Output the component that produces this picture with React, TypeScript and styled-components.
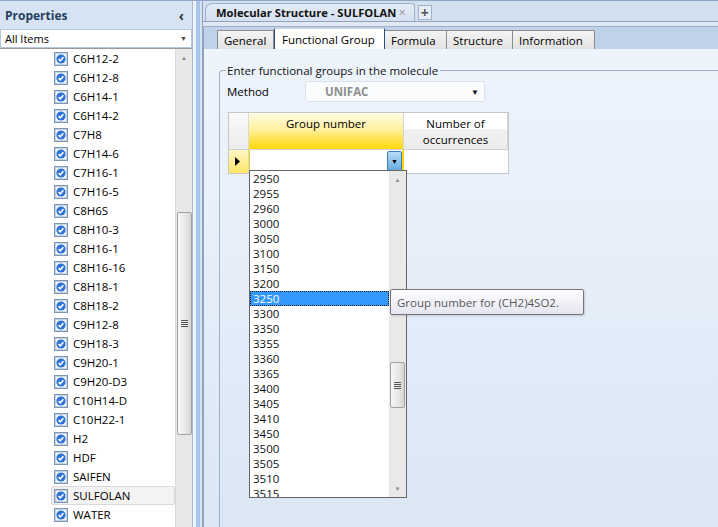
import React from "react";
import styled, { createGlobalStyle } from "styled-components";

const Global = createGlobalStyle`
  html, body { margin: 0; padding: 0; }
  body {
    width: 718px; height: 527px; overflow: hidden;
    font-family: "Open Sans", "Noto Sans", sans-serif;
    font-size: 11px; color: #000;
  }
  * { box-sizing: border-box; }
`;

const Root = styled.div`
  display: flex;
  width: 718px;
  height: 527px;
  overflow: hidden;
  border-top: 1px solid #8ea6c8;
  background: #d3e0f0;
`;

/* ---------- Left panel ---------- */
const LeftPanel = styled.div`
  width: 193px;
  display: flex;
  flex-direction: column;
  background: #d6e3f3;
  border-right: 1px solid #a9b8cb;
`;

const PanelHeader = styled.div`
  height: 28px;
  display: flex;
  align-items: center;
  justify-content: space-between;
  padding: 1px 8px 0 5px;
  font-weight: 700;
  font-size: 12px;
  color: #263e60;
`;

const Chevron = styled.span`
  font-size: 14px;
  font-weight: 700;
  color: #333;
  line-height: 1;
`;

const FilterBox = styled.div`
  height: 19px;
  background: #fff;
  border: 1px solid #b5c8e0;
  display: flex;
  align-items: center;
  justify-content: space-between;
  padding: 0 4px 0 4px;
  font-size: 11px;
`;

const SmallArrow = styled.span`
  font-size: 7px;
  color: #444;
`;

const ListArea = styled.div`
  flex: 1;
  display: flex;
  background: #fff;
  border-top: 1px solid #9a9a9a;
  overflow: hidden;
`;

const ItemColumn = styled.div`
  flex: 1;
  display: flex;
  flex-direction: column;
  padding-left: 51px;
`;

const Item = styled.div<{ $active?: boolean }>`
  height: 19px;
  flex-shrink: 0;
  display: flex;
  align-items: center;
  gap: 5px;
  padding-left: 2px;
  font-size: 11.5px;
  border: 1px solid ${(p) => (p.$active ? "#d9d9d9" : "transparent")};
  border-radius: 2px;
  background: ${(p) => (p.$active ? "#f3f3f3" : "transparent")};
`;

const VScroll = styled.div`
  width: 17px;
  flex-shrink: 0;
  background: #e8e8e8;
  border-left: 1px solid #dadada;
  display: flex;
  flex-direction: column;
  align-items: center;
`;

const ScrollArrow = styled.div`
  height: 17px;
  width: 100%;
  flex-shrink: 0;
  display: flex;
  align-items: center;
  justify-content: center;
  font-size: 6px;
  color: #8a8a8a;
`;

const Thumb = styled.div<{ $top: number; $height: number }>`
  margin-top: ${(p) => p.$top}px;
  height: ${(p) => p.$height}px;
  width: 15px;
  flex-shrink: 0;
  border: 1px solid #a2a2a2;
  border-radius: 2px;
  background: linear-gradient(to right, #f6f6f6, #e7e7e7 60%, #d4d4d4);
  display: flex;
  align-items: center;
  justify-content: center;
`;

const Grip = styled.div`
  width: 7px;
  height: 7px;
  background: repeating-linear-gradient(
    to bottom,
    #555 0px, #555 1px, transparent 1px, transparent 2px
  );
`;

const Filler = styled.div`
  flex: 1;
`;

const Splitter = styled.div`
  width: 10px;
  flex-shrink: 0;
  background: linear-gradient(to right, #eef3f9 0px, #eef3f9 3px, #a8c4e6 3px, #a8c4e6 7px, #d7e3f2 7px);
  border-right: 1px solid #8ea4c1;
`;

/* ---------- Right side ---------- */
const RightPanel = styled.div`
  flex: 1;
  display: flex;
  flex-direction: column;
  min-width: 0;
`;

const DocStrip = styled.div`
  height: 20px;
  display: flex;
  align-items: flex-end;
  padding-left: 2px;
  gap: 3px;
  background: #d3e0f0;
`;

const DocTab = styled.div`
  height: 18px;
  display: flex;
  align-items: center;
  gap: 2px;
  padding: 0 8px 0 10px;
  border: 1px solid #9fb1c8;
  border-bottom: none;
  border-radius: 7px 3px 0 0;
  background: linear-gradient(to bottom, #e3ebf6, #d5e1f0);
  font-weight: 700;
  font-size: 11.2px;
  color: #111;
  white-space: nowrap;
`;

const CloseX = styled.span`
  color: #999;
  font-weight: 400;
  font-size: 13px;
  line-height: 1;
`;

const PlusBtn = styled.div`
  width: 14px;
  height: 15px;
  margin-bottom: 1px;
  border: 1px solid #a3b3c8;
  background: #e6edf6;
  display: flex;
  align-items: center;
  justify-content: center;
  font-size: 14px;
  font-weight: 700;
  color: #555;
  line-height: 1;
`;

const StripRule = styled.div`
  height: 6px;
  border-top: 1px solid #8ea4c1;
  border-bottom: 1px solid #9cb0c8;
  background: #dfe8f3;
`;

const PageFrame = styled.div`
  flex: 1;
  display: flex;
  flex-direction: column;
  border-left: 1px solid #8ea4c1;
  min-height: 0;
`;

const TabStrip = styled.div`
  height: 22px;
  display: flex;
  align-items: flex-end;
  padding-left: 14px;
  background: #bfd2e9;
  flex-shrink: 0;
`;

const Tab = styled.div<{ $w: number; $selected?: boolean }>`
  width: ${(p) => p.$w}px;
  height: ${(p) => (p.$selected ? 21 : 19)}px;
  display: flex;
  align-items: center;
  padding-left: ${(p) => (p.$selected ? 7 : 6)}px;
  font-size: 11.5px;
  color: #000;
  border: 1px solid ${(p) => (p.$selected ? "#2c4a8a" : "#8d8d8d")};
  border-bottom: none;
  border-top-color: ${(p) => (p.$selected ? "#c9d6e6" : "#8d8d8d")};
  background: ${(p) =>
    p.$selected ? "#ffffff" : "linear-gradient(to bottom, #f4f4f4, #e2e2e2)"};
  margin-left: ${(p) => (p.$selected ? 0 : -1)}px;
  position: relative;
  z-index: ${(p) => (p.$selected ? 1 : 0)};
`;

const TabPage = styled.div`
  flex: 1;
  background: linear-gradient(to bottom, #eef4fc, #dbe7f5);
  padding: 14px 0 0 15px;
  overflow: hidden;
  position: relative;
`;

const GroupBox = styled.fieldset`
  margin: 0;
  padding: 0 0 0 7px;
  border: 1px solid #9fb2c8;
  border-right: none;
  border-bottom: none;
  border-radius: 4px 0 0 0;
  height: 600px;
  min-width: 0;
`;

const Legend = styled.legend`
  padding: 0 2px 0 1px;
  margin-left: -1px;
  font-size: 11.5px;
  line-height: 15px;
  color: #111;
`;

const MethodRow = styled.div`
  display: flex;
  align-items: center;
  height: 21px;
  margin-top: 3px;
  font-size: 11.5px;
`;

const MethodLabel = styled.span`
  width: 78px;
`;

const Combo = styled.div`
  width: 180px;
  height: 21px;
  border: 1px solid #dde3ec;
  border-radius: 2px;
  background: #fbfcfe;
  display: flex;
  align-items: center;
  justify-content: space-between;
  padding: 0 5px 0 19px;
`;

const ComboValue = styled.span`
  font-weight: 700;
  color: #8e8e8e;
  font-size: 11.5px;
`;

const ComboArrow = styled.span`
  font-size: 8px;
  color: #111;
`;

const Grid = styled.div`
  position: relative;
  margin: 10px 0 0 1px;
  width: 281px;
  border: 1px solid #c7c7c7;
  background: #fff;
  display: grid;
  grid-template-columns: 20px 155px 104px;
  grid-template-rows: 37px 23px;
`;

const Corner = styled.div`
  background: linear-gradient(to bottom, #f9f9f9, #ececec);
  border-right: 1px solid #d9d9d9;
  border-bottom: 1px solid #d0d0d0;
`;

const HeadCell = styled.div<{ $hot?: boolean }>`
  display: flex;
  align-items: flex-start;
  justify-content: center;
  text-align: center;
  padding-top: 3px;
  font-size: 11.5px;
  line-height: 16px;
  border-right: 1px solid #d5d5d5;
  border-bottom: 1px solid #d0d0d0;
  background: ${(p) =>
    p.$hot
      ? "linear-gradient(to bottom, #fffce6 0%, #fff1a0 45%, #ffe24a 75%, #ffd90a 100%)"
      : "linear-gradient(to bottom, #ffffff 0%, #ffffff 45%, #f1f1f1 46%, #ececec 100%)"};
`;

const RowHead = styled.div`
  background: linear-gradient(to bottom, #fff6c4, #ffe76a);
  border-right: 1px solid #d5d5d5;
  display: flex;
  align-items: center;
  justify-content: center;
  padding-right: 2px;
`;

const EditCell = styled.div`
  border-left: 1px solid #f2d60a;
  border-right: 2px solid #f2d60a;
  background: #fff;
  display: flex;
  justify-content: flex-end;
  align-items: stretch;
  padding: 1px 0 2px;
`;

const DropBtn = styled.div`
  width: 15px;
  border: 1px solid #3c7fb1;
  border-radius: 2px;
  background: linear-gradient(to bottom, #b9dcf6, #6aa9de);
  display: flex;
  align-items: center;
  justify-content: center;
  font-size: 7px;
  color: #000;
`;

const PlainCell = styled.div`
  background: #fff;
`;

const DropList = styled.div`
  position: absolute;
  left: 20px;
  top: 57px;
  width: 158px;
  height: 328px;
  border: 1px solid #666;
  background: #fff;
  display: flex;
  z-index: 5;
`;

const ListItems = styled.div`
  flex: 1;
  overflow: hidden;
  display: flex;
  flex-direction: column;
`;

const ListItem = styled.div<{ $sel?: boolean }>`
  height: 15px;
  flex-shrink: 0;
  line-height: 15px;
  padding-left: 3px;
  font-size: 11.5px;
  color: ${(p) => (p.$sel ? "#fff" : "#111")};
  background: ${(p) => (p.$sel ? "#3399ff" : "transparent")};
  outline: ${(p) => (p.$sel ? "1px dotted #1a1a1a" : "none")};
  outline-offset: -1px;
`;

const ListScroll = styled.div`
  width: 17px;
  flex-shrink: 0;
  background: #e9e9e9;
  display: flex;
  flex-direction: column;
  align-items: center;
`;

const Tooltip = styled.div`
  position: absolute;
  left: 161px;
  top: 176px;
  width: 194px;
  height: 26px;
  border: 1px solid #767676;
  border-radius: 2px;
  background: linear-gradient(to bottom, #ffffff, #e4e5f0);
  box-shadow: 1px 1px 2px rgba(0, 0, 0, 0.15);
  display: flex;
  align-items: center;
  padding-left: 6px;
  font-size: 11.5px;
  color: #575757;
  white-space: nowrap;
  z-index: 6;
`;

const CheckIcon = () => (
  <svg width="14" height="14" viewBox="0 0 14 14">
    <rect x="0.5" y="0.5" width="13" height="13" fill="#e4ecf6" stroke="#7f95b6" />
    <rect x="1.5" y="1.5" width="11" height="11" fill="#f3f7fc" stroke="#c5d3e6" />
    <circle cx="7" cy="7" r="4.6" fill="#2f72d6" />
    <path d="M4.6 7.1 L6.3 8.8 L9.4 5.3" stroke="#fff" strokeWidth="1.6" fill="none" />
  </svg>
);

const compounds = [
  "C6H12-2", "C6H12-8", "C6H14-1", "C6H14-2", "C7H8", "C7H14-6", "C7H16-1",
  "C7H16-5", "C8H6S", "C8H10-3", "C8H16-1", "C8H16-16", "C8H18-1", "C8H18-2",
  "C9H12-8", "C9H18-3", "C9H20-1", "C9H20-D3", "C10H14-D", "C10H22-1", "H2",
  "HDF", "SAIFEN", "SULFOLAN", "WATER",
];

const groups = [
  "2950", "2955", "2960", "3000", "3050", "3100", "3150", "3200", "3250",
  "3300", "3350", "3355", "3360", "3365", "3400", "3405", "3410", "3450",
  "3500", "3505", "3510", "3515",
];

const tabs = [
  { label: "General", w: 57 },
  { label: "Functional Group", w: 111, selected: true },
  { label: "Formula", w: 63 },
  { label: "Structure", w: 67 },
  { label: "Information", w: 83 },
];

export default function App() {
  return (
    <>
      <Global />
      <Root>
        <LeftPanel>
          <PanelHeader>
            <span>Properties</span>
            <Chevron>‹</Chevron>
          </PanelHeader>
          <FilterBox>
            <span>All Items</span>
            <SmallArrow>▼</SmallArrow>
          </FilterBox>
          <ListArea>
            <ItemColumn>
              {compounds.map((c) => (
                <Item key={c} $active={c === "SULFOLAN"}>
                  <CheckIcon />
                  <span>{c}</span>
                </Item>
              ))}
            </ItemColumn>
            <VScroll>
              <ScrollArrow>▲</ScrollArrow>
              <Thumb $top={146} $height={223}>
                <Grip />
              </Thumb>
            </VScroll>
          </ListArea>
        </LeftPanel>
        <Splitter />
        <RightPanel>
          <DocStrip>
            <DocTab>
              Molecular Structure - SULFOLAN <CloseX>×</CloseX>
            </DocTab>
            <PlusBtn>+</PlusBtn>
          </DocStrip>
          <StripRule />
          <PageFrame>
            <TabStrip>
              {tabs.map((t) => (
                <Tab key={t.label} $w={t.w} $selected={t.selected}>
                  {t.label}
                </Tab>
              ))}
            </TabStrip>
            <TabPage>
              <GroupBox>
                <Legend>Enter functional groups in the molecule</Legend>
                <MethodRow>
                  <MethodLabel>Method</MethodLabel>
                  <Combo>
                    <ComboValue>UNIFAC</ComboValue>
                    <ComboArrow>▼</ComboArrow>
                  </Combo>
                </MethodRow>
                <Grid>
                  <Corner />
                  <HeadCell $hot>Group number</HeadCell>
                  <HeadCell>
                    Number of
                    <br />
                    occurrences
                  </HeadCell>
                  <RowHead>
                    <svg width="6" height="9" viewBox="0 0 6 9">
                      <path d="M0 0 L5 4.5 L0 9 Z" fill="#000" />
                    </svg>
                  </RowHead>
                  <EditCell>
                    <DropBtn>▼</DropBtn>
                  </EditCell>
                  <PlainCell />
                  <DropList>
                    <ListItems>
                      {groups.map((g) => (
                        <ListItem key={g} $sel={g === "3250"}>
                          {g}
                        </ListItem>
                      ))}
                    </ListItems>
                    <ListScroll>
                      <ScrollArrow>▲</ScrollArrow>
                      <Thumb $top={174} $height={46}>
                        <Grip />
                      </Thumb>
                      <Filler />
                      <ScrollArrow>▼</ScrollArrow>
                    </ListScroll>
                  </DropList>
                  <Tooltip>Group number for (CH2)4SO2.</Tooltip>
                </Grid>
              </GroupBox>
            </TabPage>
          </PageFrame>
        </RightPanel>
      </Root>
    </>
  );
}
